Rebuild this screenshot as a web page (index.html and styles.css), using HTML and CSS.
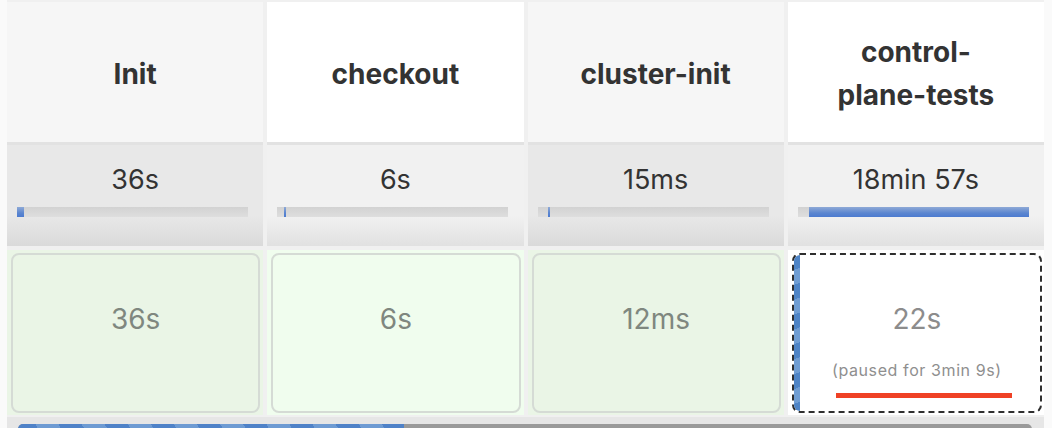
FILE: index.html
```html
<!DOCTYPE html>
<html lang="en">
<head>
<meta charset="utf-8">
<title>Stage view</title>
<link rel="stylesheet" href="styles.css">
</head>
<body>
<div class="stages">
  <div class="head odd">Init</div>
  <div class="head even">checkout</div>
  <div class="head odd">cluster-init</div>
  <div class="head even">control-plane-tests</div>

  <div class="dur odd">
    <div class="dur-text">36s</div>
    <div class="bar"><span class="fill" style="margin-left:0;width:7px"></span></div>
  </div>
  <div class="dur even">
    <div class="dur-text">6s</div>
    <div class="bar"><span class="fill" style="margin-left:7px;width:2px"></span></div>
  </div>
  <div class="dur odd">
    <div class="dur-text">15ms</div>
    <div class="bar"><span class="fill" style="margin-left:10px;width:2px"></span></div>
  </div>
  <div class="dur even">
    <div class="dur-text">18min 57s</div>
    <div class="bar"><span class="fill" style="margin-left:11px;width:220px"></span></div>
  </div>

  <div class="cell ok odd"><div class="box"><div class="time">36s</div></div></div>
  <div class="cell ok even"><div class="box"><div class="time">6s</div></div></div>
  <div class="cell ok odd"><div class="box"><div class="time">12ms</div></div></div>
  <div class="cell run">
    <div class="box paused">
      <span class="stripe"></span>
      <div class="time">22s</div>
      <div class="pause">(paused for 3min 9s)</div>
      <div class="redline"></div>
    </div>
  </div>

  <div class="next"><div class="next-bar"><span class="next-fill"></span></div></div>
</div>
</body>
</html>
```

FILE: styles.css
```css
html, body {
  margin: 0;
  padding: 0;
  background: #fafafa;
  height: 428px;
  overflow: hidden;
}

.stages {
  margin-left: 7px;
  width: 1037px;
  padding-top: 2px;
  background: #f0f0f0;
  display: grid;
  grid-template-columns: repeat(4, 1fr);
  column-gap: 4px;
  font-family: Inter, "Liberation Sans", sans-serif;
  color: #333;
}

.head {
  height: 140px;
  box-sizing: border-box;
  display: flex;
  align-items: center;
  justify-content: center;
  text-align: center;
  padding: 4px 36px 0;
  font-weight: 700;
  font-size: 28px;
  line-height: 43px;
}
.head.odd { background: #f6f6f6; }
.head.even { background: #ffffff; }

.dur {
  border-top: 3px solid #e2e2e2;
  padding-top: 19px;
  height: 82px;
}
.dur.odd { background: linear-gradient(to bottom, #e8e8e8 0%, #e8e8e8 70%, #dadada 100%); }
.dur.even { background: linear-gradient(to bottom, #f1f1f1 0%, #f1f1f1 70%, #e1e1e1 100%); }

.dur-text {
  text-align: center;
  font-size: 27px;
  line-height: 32px;
  color: #333;
}

.bar {
  margin: 11px 0 0 10px;
  width: 231px;
  height: 10px;
  background: linear-gradient(to bottom, #d2d2d2, #dedede);
  display: flex;
}
.fill {
  display: block;
  height: 10px;
  background: linear-gradient(to bottom, #8ea9d6, #5b86d0 60%, #4c7bd0);
}

.cell {
  margin-top: 4px;
  height: 165px;
  padding: 3px 3px 2px 4px;
  box-sizing: border-box;
}
.cell.ok.odd { background: #eaf5e6; }
.cell.ok.even { background: #f0fdee; }
.cell.run { background: #ffffff; padding: 3px 2px 2px 4px; }

.box {
  height: 160px;
  box-sizing: border-box;
  border: 2px solid #d5dbd5;
  border-radius: 8px;
  display: flex;
  flex-direction: column;
  align-items: center;
  padding-top: 47px;
  position: relative;
  overflow: hidden;
}
.time {
  font-size: 28px;
  line-height: 34px;
  color: #7f877f;
}
.paused {
  border: 2px dashed #2e2e2e;
}
.paused .time { color: #8c8c8c; }
.stripe {
  position: absolute;
  left: 0;
  top: 0;
  bottom: 0;
  width: 6px;
  background: repeating-linear-gradient(160deg, #4e84c6 0 14px, #6f9dd3 14px 28px);
}
.pause {
  margin-top: 24px;
  font-size: 16px;
  line-height: 20px;
  color: #8f8f8f;
  letter-spacing: 0.6px;
}
.redline {
  margin-top: 13px;
  margin-left: 14px;
  width: 176px;
  height: 5px;
  background: #ef4125;
}

.next {
  grid-column: 1 / -1;
  margin-top: 2px;
  height: 20px;
  background: #e6e6e6;
  padding: 7px 12px 0 11px;
  box-sizing: border-box;
}
.next-bar {
  height: 10px;
  border-radius: 5px;
  background: #9a9a9a;
  overflow: hidden;
  display: flex;
}
.next-fill {
  display: block;
  width: 386px;
  height: 10px;
  background: repeating-linear-gradient(60deg, #4f82c8 0 20px, #6e9bd3 20px 40px);
}
```
